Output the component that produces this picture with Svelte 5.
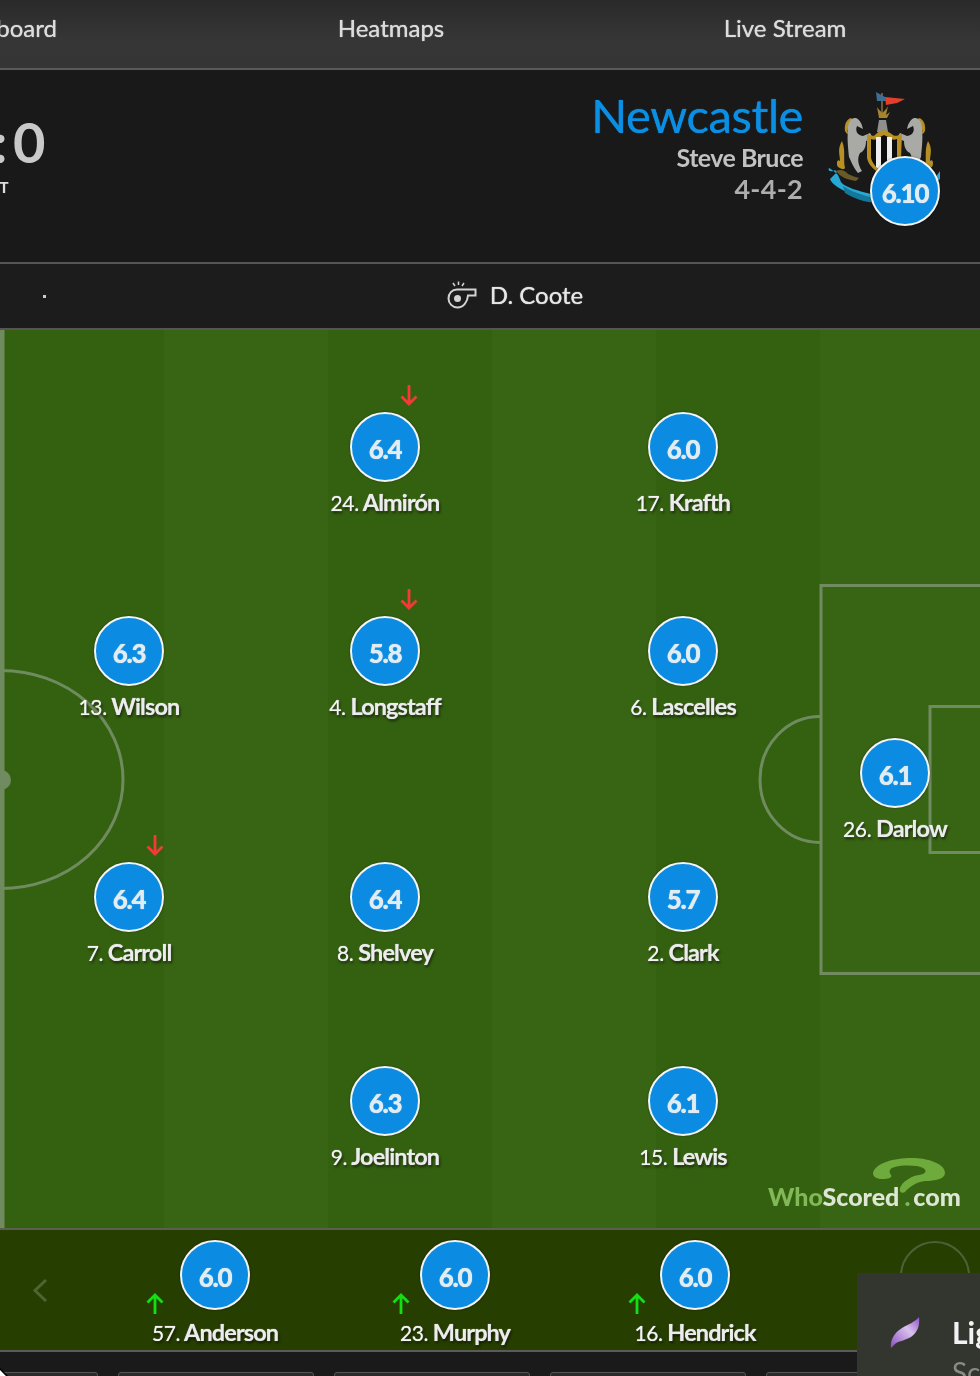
<script>
  const down = 'down', up = 'up';
  const players = [
    { x: 385, y: 448, r: '6.4', n: '24.', name: 'Almirón', a: down, ax: 409, ay: 395 },
    { x: 683, y: 448, r: '6.0', n: '17.', name: 'Krafth' },
    { x: 129, y: 652, r: '6.3', n: '13.', name: 'Wilson' },
    { x: 385, y: 652, r: '5.8', n: '4.', name: 'Longstaff', a: down, ax: 409, ay: 599 },
    { x: 683, y: 652, r: '6.0', n: '6.', name: 'Lascelles' },
    { x: 129, y: 898, r: '6.4', n: '7.', name: 'Carroll', a: down, ax: 155, ay: 845 },
    { x: 385, y: 898, r: '6.4', n: '8.', name: 'Shelvey' },
    { x: 683, y: 898, r: '5.7', n: '2.', name: 'Clark' },
    { x: 385, y: 1102, r: '6.3', n: '9.', name: 'Joelinton' },
    { x: 683, y: 1102, r: '6.1', n: '15.', name: 'Lewis' },
    { x: 895, y: 774, r: '6.1', n: '26.', name: 'Darlow' }
  ].map((p) => ({ ...p, y: p.y - 330, ay: p.ay ? p.ay - 330 : 0 }));
  const subs = [
    { x: 215, r: '6.0', n: '57.', name: 'Anderson', ax: 155 },
    { x: 455, r: '6.0', n: '23.', name: 'Murphy', ax: 401 },
    { x: 695, r: '6.0', n: '16.', name: 'Hendrick', ax: 637 }
  ];
  const tabs = ['Chalkboard', 'Heatmaps', 'Live Stream'];
  const stripes = [0, 1, 2, 3, 4, 5];
</script>

<div class="page">
  <nav class="nav">
    {#each tabs as t}<span class="tab">{t}</span>{/each}
  </nav>

  <header class="head">
    <div class="score">
      <div class="goals">: 0</div>
      <div class="ft">FT</div>
    </div>
    <div class="team">
      <div class="team-name">Newcastle</div>
      <div class="manager">Steve Bruce</div>
      <div class="formation">4-4-2</div>
    </div>
    <div class="crest">
      <svg width="130" height="150" viewBox="0 0 130 150">
        <path d="M62 8v24" stroke="#a88a3a" stroke-width="1.2" />
        <path d="M56 7l9 5 1 4-9 0z" fill="#3d6f96" />
        <path d="M65 12l20 2-8 4-11 2z" fill="#e2402c" />
        <path d="M57 22c2 3 4 4 5 6 2-2 4-3 6-7l-2 9 4-3-3 6h-8z" fill="#a8842a" />
        <path d="M59 35h7l2 12h-11z" fill="#8f8f8f" />
        <path d="M22 56c-5 8-2 14-2 20-3-3-4 3-2 6 3 2 6 3 7 1-2-8 1-18-3-27z" fill="#b78f24" />
        <path d="M108 56c5 8 2 14 2 20 3-3 4 3 2 6-3 2-6 3-7 1 2-8-1-18 3-27z" fill="#b78f24" />
        <path d="M31 33c-4 1-7 6-6 13 1 2 2 3 3 3-1-6 1-11 5-14z" fill="#b78f24" />
        <path d="M99 33c4 1 7 6 6 13-1 2-2 3-3 3 1-6-1-11-5-14z" fill="#b78f24" />
        <path d="M43 44L37 41C35 46 37 50 43 51L50 48L53 53L46 56C46 62 44 66 40 68C37 73 38 80 42 86L38 88C33 82 31 76 29 72C28 62 27 52 28 46C27 38 31 32 36 33C40 35 42 39 43 44z" fill="#a9a9a6" />
        <path d="M87 44L93 41C95 46 93 50 87 51L80 48L77 53L84 56C84 62 86 66 90 68C93 73 92 80 88 86L92 88C97 82 99 76 101 72C102 62 103 52 102 46C103 38 99 32 94 33C90 35 88 39 87 44z" fill="#a9a9a6" />
        <path d="M47 49c4 1 6 3 8 1 4-4 5-4 9-5 4 1 6 3 9 5 3 2 5 0 9-1l-1 24c-2 9-9 13-17 18-8-5-15-9-17-18z" fill="#b78f24" />
        <path d="M51 54c3 1 5 1 7-1l6-3 6 3c2 2 4 2 7 1v19c-2 7-7 11-13 15-6-4-11-8-13-15z" fill="#0d0d0d" />
        <path d="M56 52h5v34l-5-4zM67 52h5v30l-5 4z" fill="#eee" />
        <path d="M9 83c-2 4 4 4 6 2l2 2c-3 3-6 6-7 7 2 7 21 17 44 22 0-3 2-6 3-6-18-3-34-9-36-13l-3-7c-3-3-7-6-9-7z" fill="#27a9d6" />
        <path d="M23 101c9 6 22 10 33 12l1 5c-14-1-24-5-32-10z" fill="#14789a" />
        <path d="M16 86c4-2 9-1 12 3 4 2 8 3 11 4l-3 3c-8-1-16-4-20-10z" fill="#6a5a28" />
        <path d="M120 86l-10 14-20 12 10-2 20-16z" fill="#27a9d6" />
      </svg>
      <span class="bubble team-bubble">6.10</span>
    </div>
  </header>

  <div class="ref">
    <span class="dot"></span>
    <span class="ref-name">
      <svg width="30" height="30" viewBox="0 0 30 30" fill="none" stroke="#d2d2d2" stroke-width="2">
        <path d="M11.500 0.500v3.500M6 2l2 3M17 2l-2 3" stroke-width="1.500" />
        <path d="M10 8.500H28.500V14.500H21C20.500 21 16.500 26.500 10.500 26.500C5.500 26.500 1.500 22.500 1.500 17.500C1.500 12.500 5 8.500 10 8.500z" />
        <circle cx="10.500" cy="17.500" r="3.500" fill="#d2d2d2" stroke="none" />
      </svg>
      D. Coote
    </span>
  </div>

  <main class="pitch">
    <div class="stripes">
      {#each stripes as s}<i class:alt={s % 2 === 1}></i>{/each}
    </div>
    <svg class="lines" width="980" height="898" viewBox="0 330 980 898" fill="none" stroke="#708b60" stroke-width="3">
      <path d="M2 330v898" stroke-width="5" />
      <circle cx="1" cy="780" r="10" fill="#708b60" stroke="none" />
      <ellipse cx="1" cy="779.500" rx="122" ry="109" stroke-width="3" />
      <path d="M985 585.500H821V973.500H985" />
      <path d="M985 706.500H930V852.500H985" />
      <path d="M820 716.500A60 63 0 0 0 820 842.500" stroke-width="3" />
    </svg>

    {#each players as p}
      <div class="player" style="left:{p.x}px;top:{p.y}px">
        <span class="bubble">{p.r}</span>
        <span class="label"><em>{p.n}</em> {p.name}</span>
      </div>
      {#if p.a}
        <svg class="arrow" style="left:{p.ax}px;top:{p.ay}px" width="18" height="22" viewBox="0 0 18 22" fill="none" stroke="#f53a36" stroke-width="2.800">
          <path d="M9 1v19M1.500 12.500L9 20l7.500-7.500" />
        </svg>
      {/if}
    {/each}

    <div class="logo">
      <svg width="74" height="37" viewBox="0 0 74 37">
        <path d="M0 15C2 5 22 0 38 0C56 0 72 6 72 15C72 21 62 23 52 23C44 24 37 28 32 34C29 36 26 34 27 30C29 24 38 18 46 17C52 16 55 13 50 10C44 7 30 7 22 9C17 10 15 13 18 17C20 20 14 21 10 21C4 21 0 19 0 15z" fill="#6fab3c" />
      </svg>
      <div class="logo-text"><b>Who</b>Scored<b class="lg-dot">.</b>com</div>
    </div>
  </main>

  <section class="subs">
    <svg class="chev" width="16" height="24" viewBox="0 0 16 24" fill="none" stroke="#4e6532" stroke-width="3">
      <path d="M14 2L3 12.500 14 23" />
    </svg>
    {#each subs as s}
      <div class="player sub" style="left:{s.x}px">
        <span class="bubble">{s.r}</span>
        <span class="label"><em>{s.n}</em> {s.name}</span>
      </div>
      <svg class="arrow sub-arrow" style="left:{s.ax}px" width="18" height="22" viewBox="0 0 18 22" fill="none" stroke="#12e012" stroke-width="2.800">
        <path d="M9 21V2M1.500 9.500L9 2l7.500 7.500" />
      </svg>
    {/each}
    <span class="ghost"></span>
  </section>

  <div class="foot">
    <span class="box b0"></span>
    <span class="box b1"></span>
    <span class="box b1"></span>
    <span class="box b1"></span>
    <span class="box b1"></span>
    <svg class="cursor" width="10" height="9" viewBox="0 0 10 9">
      <path d="M-3-2L8 9H-3z" fill="#fff" stroke="#000" stroke-width="1.500" />
    </svg>
  </div>

  <aside class="panel">
    <svg class="feather" width="32" height="34" viewBox="0 0 32 34">
      <defs>
        <linearGradient id="fg" x1="0" y1="1" x2="1" y2="0">
          <stop offset="0" stop-color="#8a4fc0" />
          <stop offset="0.6" stop-color="#d9c2ee" />
          <stop offset="1" stop-color="#8f55c6" />
        </linearGradient>
      </defs>
      <path d="M2 32C1 24 5 17 13 12 20 8 26 6 30 1c1 8-1 15-8 20-7 4-13 4-16 7-2 2-3 3-4 4z" fill="url(#fg)" />
    </svg>
    <div class="panel-text">
      <div class="p-title">Lightning</div>
      <div class="p-sub">Score</div>
    </div>
  </aside>
</div>

<style>
  :global(body) { margin: 0; background: #1a1a1a; }
  .page {
    position: relative;
    width: 980px;
    height: 1376px;
    overflow: hidden;
    font-family: Lato, "Open Sans", sans-serif;
    background: #1a1a1a;
    filter: blur(0.6px);
  }
  .nav {
    display: grid;
    grid-template-columns: repeat(3, 394px);
    margin-left: -200px;
    height: 68px;
    width: 1182px;
    align-items: center;
    background: linear-gradient(#2a2a2a, #363636 60%, #353535);
    border-bottom: 2px solid #5a5a5a;
  }
  .tab {
    text-align: center;
    color: #dcdcdc;
    font-size: 24px;
    letter-spacing: 0;
    position: relative;
    top: -7px;
    text-shadow: 0 0 1px #dcdcdc;
  }
  .head {
    display: flex;
    height: 192px;
    background: #191919;
    border-bottom: 2px solid #555;
  }
  .score {
    width: 39px;
    text-align: right;
    color: #c9c9c9;
    padding-top: 39px;
    flex: none;
  }
  .goals { font-size: 56px; font-weight: 700; line-height: 66px; white-space: nowrap; word-spacing: -8px; margin-left: -7px; text-align: left; }
  .ft { font-size: 15px; font-weight: 900; color: #ddd; text-align: left; margin: 3px 0 0 -9px; line-height: 18px; }
  .team {
    flex: 1;
    text-align: right;
    padding-top: 16px;
  }
  .team-name {
    color: #0b8fe4;
    font-size: 47px;
    line-height: 58px;
    letter-spacing: -0.4px;
    text-shadow: 0 0 1px #0b8fe4;
  }
  .manager {
    color: #c2c2c2;
    font-size: 25px;
    line-height: 30px;
    font-weight: 700;
    letter-spacing: -0.55px;
    margin-top: -2px;
  }
  .formation { color: #aeaeae; font-size: 27px; line-height: 34px; font-weight: 700; letter-spacing: 0.3px; }
  .crest { position: relative; width: 177px; flex: none; }
  .crest svg { position: absolute; left: 17px; top: 15px; }
  .team-bubble { position: absolute; left: 67px; top: 86px; }
  .bubble {
    display: flex;
    align-items: center;
    justify-content: center;
    box-sizing: border-box;
    width: 70px;
    height: 70px;
    border-radius: 50%;
    border: 2px solid #f4f4f4;
    background: #0b8ce2;
    color: #e2ecf3;
    font-weight: 900;
    font-size: 26px;
    letter-spacing: -1.2px;
    text-shadow: 0 0 1px #e2ecf3;
    box-shadow: 0 0 2px rgba(0, 0, 0, 0.5);
    padding-top: 3px;
  }
  .ref {
    position: relative;
    display: flex;
    justify-content: center;
    align-items: center;
    height: 64px;
    background: #1c1c1c;
    border-bottom: 2px solid #555;
  }
  .dot { position: absolute; left: 43px; top: 31px; width: 3px; height: 3px; background: #ccc; }
  .ref-name {
    position: relative;
    left: 25px;
    top: -2px;
    display: flex;
    align-items: center;
    gap: 13px;
    color: #e6e6e6;
    font-size: 24px;
    text-shadow: 0 0 1px #e6e6e6;
  }
  .ref-name svg { position: relative; top: 2px; }
  .pitch { position: relative; height: 898px; overflow: hidden; }
  .stripes { display: flex; height: 100%; }
  .stripes i { flex: none; width: 164px; height: 100%; background: #346110; }
  .stripes i.alt { background: #386513; }
  .lines { position: absolute; left: 0; top: 0; }
  .player {
    position: absolute;
    width: 0;
    display: flex;
    flex-direction: column;
    align-items: center;
    margin-top: -36px;
  }
  .player .bubble { flex: none; }
  .label {
    margin-top: 6px;
    line-height: 28px;
    white-space: nowrap;
    font-size: 23.500px;
    font-weight: 700;
    letter-spacing: -0.900px;
    color: #ececec;
    text-shadow: 1px 2px 3px rgba(0, 0, 0, 0.65), 0 0 1px #ececec;
  }
  .label em { font-style: normal; font-weight: 400; font-size: 21px; letter-spacing: -0.400px; color: #f4f4f4; }
  .arrow { position: absolute; margin-left: -9px; margin-top: -11px; }
  .logo { position: absolute; left: 768px; top: 828px; width: 205px; }
  .logo svg { display: block; margin-left: 105px; }
  .logo-text {
    margin-top: -14px;
    font-size: 25px;
    font-weight: 900;
    color: #dfe6d6;
    white-space: nowrap;
    line-height: 30px;
    position: relative;
  }
  .logo-text b { color: #82b858; font-weight: 900; }
  .logo-text .lg-dot { margin: 0 3px 0 5px; }
  .subs {
    position: relative;
    height: 120px;
    background: #263e00;
    border-top: 2px solid #5c5f50;
    border-bottom: 2px solid #5a5a5a;
  }
  .sub { top: 46px; }
  .sub .label { margin-top: 8px; }
  .sub-arrow { top: 74px; }
  .chev { position: absolute; left: 32px; top: 48px; }
  .ghost {
    position: absolute;
    left: 900px;
    top: 11px;
    width: 70px;
    height: 70px;
    box-sizing: border-box;
    border-radius: 50%;
    border: 2px solid #4f6038;
  }
  .foot {
    position: relative;
    display: flex;
    gap: 20px;
    height: 24px;
    margin-left: -98px;
    padding-top: 20px;
    box-sizing: border-box;
  }
  .box {
    flex: none;
    width: 196px;
    height: 20px;
    border: 1.500px solid #565656;
    border-radius: 3px;
    background: #2a2a2a;
    box-sizing: border-box;
  }
  .cursor { position: absolute; left: 98px; top: 16px; }
  .panel {
    position: absolute;
    left: 857px;
    top: 1273px;
    width: 123px;
    height: 103px;
    display: flex;
    gap: 31px;
    padding: 43px 0 0 32px;
    box-sizing: border-box;
    background: #33352f;
    overflow: hidden;
  }
  .feather { flex: none; }
  .panel-text { white-space: nowrap; margin-top: -2px; }
  .p-title { color: #f2f2f2; font-size: 30px; font-weight: 700; line-height: 36px; }
  .p-sub { color: #8b8c87; font-size: 28px; line-height: 36px; margin-top: 4px; }
</style>
